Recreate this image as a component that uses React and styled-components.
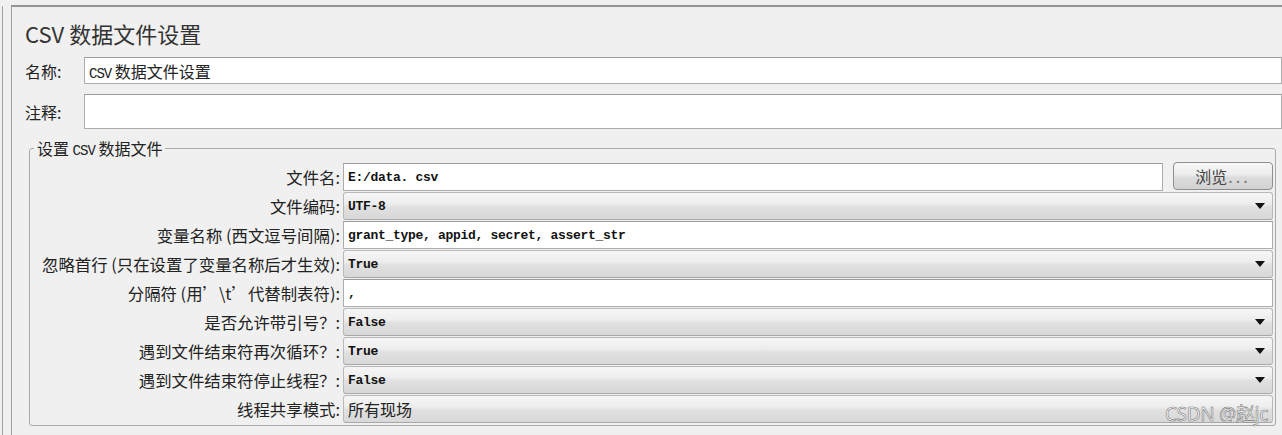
import React from "react";
import styled, { createGlobalStyle } from "styled-components";

const GlobalStyle = createGlobalStyle`
  html, body { margin: 0; padding: 0; background: #f0f0f0; }
  body { font-family: "Noto Sans CJK SC", "Noto Sans", sans-serif; }
  * { box-sizing: border-box; }
`;

const Page = styled.div`
  position: relative;
  display: flex;
  height: 435px;
  width: 1282px;
  overflow: hidden;
  padding-top: 5px;
  background: #f0f0f0;
`;

const LeftStrip = styled.div`
  width: 3px;
  margin-top: 1px;
  border-right: 1px solid #a4a4a4;
  margin-right: 8px;
  flex: none;
`;

const Panel = styled.div`
  flex: 1;
  min-width: 0;
  border-top: 2px solid #939393;
  border-left: 1px solid #a0a0a0;
  padding: 13px 0 0 13px;
`;

const Title = styled.div`
  font-size: 22px;
  line-height: 26px;
  color: #333;
  margin-bottom: 11px;
  white-space: nowrap;
`;

const TopForm = styled.div`
  display: grid;
  grid-template-columns: 59px 1fr;
  row-gap: 10px;
  align-items: center;
`;

const Label = styled.div`
  font-size: 16px;
  line-height: 20px;
  color: #222;
  white-space: nowrap;
`;

const Mono = styled.span`
  font-family: "Liberation Mono", "DejaVu Sans Mono", monospace;
  font-size: ${(p) => p.$size || 14}px;
  letter-spacing: -1px;
  line-height: 1;
`;

const TextInput = styled.div`
  height: ${(p) => p.$h || 28}px;
  background: #fff;
  border: 1px solid #adadad;
  border-top-color: #9c9c9c;
  display: flex;
  align-items: center;
  padding-left: 4px;
  color: #111;
  font-size: 16px;
  white-space: nowrap;
  overflow: hidden;
  min-width: 0;
  flex: 1;
`;

const Value = styled.span`
  font-family: "Liberation Mono", "DejaVu Sans Mono", monospace;
  font-size: 13px;
  letter-spacing: -0.3px;
  color: #111;
  font-weight: 600;
`;

const CJKValue = styled.span`
  font-size: 16px;
  line-height: 20px;
  color: #222;
`;

const Fieldset = styled.fieldset`
  margin: 9px 6px 0 4px;
  padding: 5px 2px 2px 4px;
  border: 1px solid #a9a9a9;
  border-radius: 3px;
  min-width: 0;
`;

const Legend = styled.legend`
  padding: 0 3px;
  font-size: 16px;
  line-height: 20px;
  height: 20px;
  color: #222;
  white-space: nowrap;
`;

const Grid = styled.div`
  display: grid;
  grid-template-columns: 306px 1fr;
  column-gap: 3px;
  row-gap: 1px;
  grid-auto-rows: 28px;
  align-items: stretch;
`;

const RowLabel = styled.div`
  display: flex;
  justify-content: flex-end;
  align-items: center;
  font-size: 16.4px;
  line-height: 20px;
  color: #222;
  white-space: nowrap;
`;

const FieldRow = styled.div`
  display: flex;
  gap: 10px;
  min-width: 0;
`;

const Combo = styled.div`
  height: 28px;
  display: flex;
  align-items: center;
  justify-content: space-between;
  padding: 0 7px 0 4px;
  border: 1px solid #b9b9b9;
  border-bottom-color: #a8a8a8;
  border-radius: 3px;
  background: linear-gradient(
    to bottom,
    #f6f6f6 0%,
    #eeeeee 40%,
    #e0e0e0 55%,
    #d8d8d8 100%
  );
  white-space: nowrap;
  overflow: hidden;
`;

const Button = styled.div`
  width: 100px;
  height: 28px;
  flex: none;
  margin-top: -1px;
  display: flex;
  align-items: center;
  justify-content: center;
  border: 1px solid #8f8f8f;
  border-radius: 4px;
  background: linear-gradient(to bottom, #f7f7f7 0%, #ececec 45%, #dcdcdc 55%, #d2d2d2 100%);
  font-size: 16px;
  color: #444;
`;

const Dots = styled.span`
  letter-spacing: 3px;
  color: #777;
  margin-left: 1px;
`;

const Watermark = styled.div`
  position: absolute;
  right: 14px;
  bottom: 10px;
  font-family: "Noto Sans", "Noto Sans CJK SC", sans-serif;
  font-size: 19px;
  line-height: 22px;
  color: #fbfbfb;
  -webkit-text-stroke: 0.6px #7a7a7a;
  letter-spacing: -0.3px;
`;

const Arrow = () => (
  <svg width="10" height="6" viewBox="0 0 10 6">
    <polygon points="0,0 10,0 5,6" fill="#111" />
  </svg>
);

const rows = [
  { label: "文件名:", type: "file", value: "E:/data. csv" },
  { label: "文件编码:", type: "combo", value: "UTF-8" },
  { label: "变量名称 (西文逗号间隔):", type: "input", value: "grant_type, appid, secret, assert_str" },
  { label: "忽略首行 (只在设置了变量名称后才生效):", type: "combo", value: "True" },
  { label: "分隔符  (用’\\t’代替制表符):", type: "input", value: "," },
  { label: "是否允许带引号？:", type: "combo", value: "False" },
  { label: "遇到文件结束符再次循环？:", type: "combo", value: "True" },
  { label: "遇到文件结束符停止线程？:", type: "combo", value: "False" },
  { label: "线程共享模式:", type: "combo-cjk", value: "所有现场" },
];

function Field({ row }) {
  if (row.type === "file") {
    return (
      <FieldRow>
        <TextInput>
          <Value>{row.value}</Value>
        </TextInput>
        <Button>
          浏览<Dots>...</Dots>
        </Button>
      </FieldRow>
    );
  }
  if (row.type === "input") {
    return (
      <TextInput>
        <Value>{row.value}</Value>
      </TextInput>
    );
  }
  if (row.type === "combo-cjk") {
    return (
      <Combo>
        <CJKValue>{row.value}</CJKValue>
      </Combo>
    );
  }
  return (
    <Combo>
      <Value>{row.value}</Value>
      <Arrow />
    </Combo>
  );
}

export default function App() {
  return (
    <>
      <GlobalStyle />
      <Page>
        <LeftStrip />
        <Panel>
          <Title>CSV 数据文件设置</Title>
          <TopForm>
            <Label>名称:</Label>
            <TextInput $h={27}>
              <CJKValue>
                <Mono>CSV</Mono> 数据文件设置
              </CJKValue>
            </TextInput>
            <Label>注释:</Label>
            <TextInput $h={35} />
          </TopForm>
          <Fieldset>
            <Legend>
              设置 <Mono>CSV</Mono> 数据文件
            </Legend>
            <Grid>
              {rows.map((r) => (
                <React.Fragment key={r.label}>
                  <RowLabel>{r.label}</RowLabel>
                  <Field row={r} />
                </React.Fragment>
              ))}
            </Grid>
          </Fieldset>
        </Panel>
        <Watermark>CSDN @赵jc</Watermark>
      </Page>
    </>
  );
}
